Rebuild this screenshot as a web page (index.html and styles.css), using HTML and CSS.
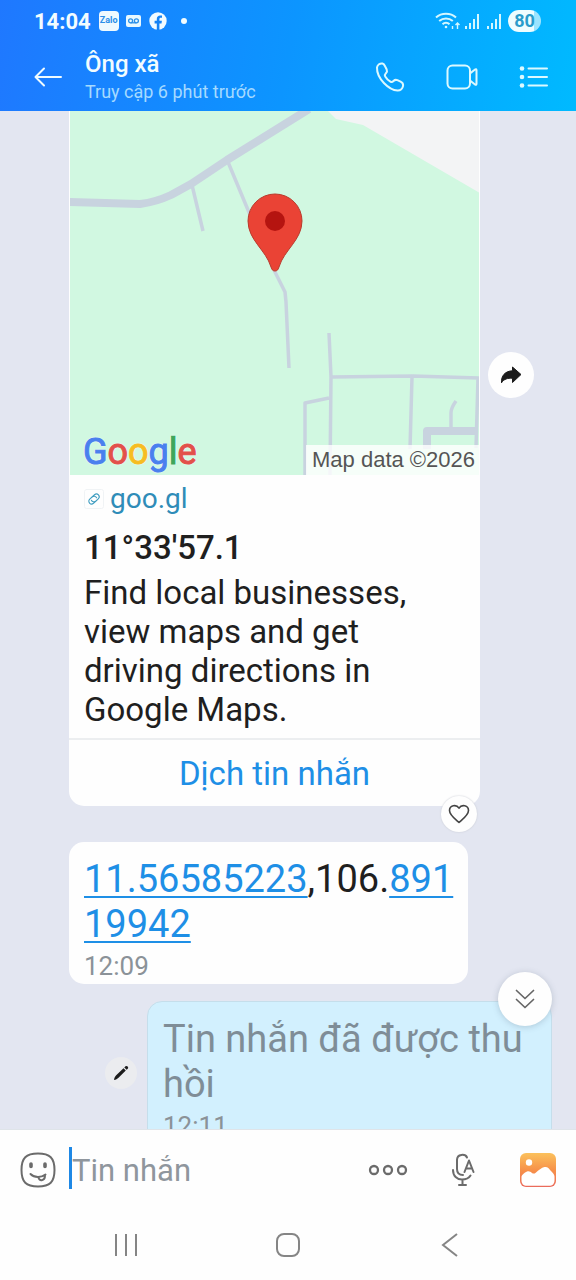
FILE: index.html
```html
<!DOCTYPE html>
<html lang="vi">

<head>
    <meta charset="utf-8">
    <meta name="viewport" content="width=device-width, initial-scale=1">
    <title>Ông xã</title>
    <link rel="stylesheet" href="styles.css">
</head>

<body>

    <header class="header">
        <div class="status">
            <span class="clock">14:04</span>
            <span class="zalo">Zalo</span>
            <svg class="voicemail" width="15" height="12" viewBox="0 0 15 12">
                <rect width="15" height="12" rx="2" fill="#e8f8ff" />
                <g fill="none" stroke="#2b8fe8" stroke-width="1.3">
                    <circle cx="4.6" cy="5.8" r="2" />
                    <circle cx="10.4" cy="5.8" r="2" />
                    <path d="M4.6 7.8h5.8" />
                </g>
            </svg>
            <svg class="facebook" width="18" height="18" viewBox="0 0 18 18">
                <circle cx="9" cy="9" r="8.7" fill="#f2fbff" />
                <path d="M7.8 18v-6.6H5.6V8.8h2.2V7c0-2.4 1.3-3.6 3.5-3.6l1.7.1v2.2h-1.1c-1.1 0-1.5.6-1.5 1.4v1.7h2.5l-.4 2.6h-2.1V18z" fill="#1583f5" />
            </svg>
            <span class="dot"></span>
            <span class="spacer"></span>
            <svg width="66" height="20" viewBox="0 0 66 20" fill="none" stroke="#d4f7ff" stroke-width="2">
                <path d="M1 6.500c5.500-5 14.500-5 20 0M4.200 10c4-3.500 9.600-3.500 13.600 0M7.500 13.200c2-1.800 5-1.800 7 0" />
                <circle cx="11" cy="16" r="1.300" fill="#d4f7ff" stroke="none" />
                <path d="M17.500 18v-3M22.500 18v-6M20.500 14l2-2 2 2" stroke-width="1.400" />
                <path d="M31 18v-3M35 18v-6M39 18v-10M43 18V3M53 18v-3M57 18v-6M61 18v-10M65 18V3" />
            </svg>
            <span class="battery">80</span>
        </div>
        <div class="titlebar">
            <button class="back" aria-label="Quay lại">
                <svg width="28" height="20" viewBox="0 0 28 20" fill="none" stroke="#effbff" stroke-width="2" stroke-linecap="round" stroke-linejoin="round">
                    <path d="M27 10H2M10 1.500L1.500 10l8.500 8.500" />
                </svg>
            </button>
            <div class="who">
                <h1>Ông xã</h1>
                <p>Truy cập 6 phút trước</p>
            </div>
            <button class="action" aria-label="Gọi thoại">
                <svg width="30" height="30" viewBox="0 0 30 30" fill="none" stroke="#dcf9ff" stroke-width="2" stroke-linejoin="round">
                    <path d="M2 5.500C2.500 2.800 5 1 7.500 1.500c1.300.3 2 1.500 2.700 3l1.500 3c.7 1.600.4 2.600-.8 3.800-1.100 1.100-1.400 1.900-.7 3.100 1.300 2.200 3 3.900 5.200 5.200 1.200.7 2 .5 3.100-.6 1.200-1.200 2.300-1.500 3.900-.8l3.200 1.500c1.800.9 2.700 2.200 2.500 3.900-.4 2.800-2.600 5-5.600 4.900C14 28 1.600 16.500 2 5.500z" />
                </svg>
            </button>
            <button class="action" aria-label="Gọi video">
                <svg width="32" height="26" viewBox="0 0 32 26" fill="none" stroke="#dcf9ff" stroke-width="2" stroke-linejoin="round">
                    <rect x="1.500" y="1.500" width="22.500" height="23" rx="5" />
                    <path d="M24 9.500l5-4c.8-.6 1.500-.3 1.500.7v13.600c0 1-.7 1.300-1.500.7l-5-4" />
                </svg>
            </button>
            <button class="action" aria-label="Tùy chọn">
                <svg width="30" height="22" viewBox="0 0 30 22" fill="#dcf9ff" stroke="#dcf9ff" stroke-width="2" stroke-linecap="round">
                    <path d="M9.500 2.500H28M9.500 11H28M9.500 19.500H28" />
                    <g stroke="none">
                        <circle cx="3" cy="2.500" r="2.300" />
                        <circle cx="3" cy="11" r="2.300" />
                        <circle cx="3" cy="19.500" r="2.300" />
                    </g>
                </svg>
            </button>
        </div>
    </header>

    <main class="chat">
        <div class="messages">

            <div class="row">
                <article class="card">
                    <div class="map">
                        <svg class="map-drawing" viewBox="0 0 411 364" preserveAspectRatio="xMidYMid slice">
                            <rect width="411" height="364" fill="#d1f8e1" />
                            <path d="M259 0l8 8 27 6L411 82V0z" fill="#f3f4f5" />
                            <g fill="none" stroke="#c8d3df" stroke-width="3.500" stroke-linejoin="round">
                                <path d="M0 91l71 2q16-2 31-9l20-11 36-24 82-51" stroke-width="8" />
                                <path d="M123 74l11 46M159 51l20 48 27 62 10 20 1 10 3 66" />
                                <path d="M260 222l2 44-1 98M262 266l82-1 67 2M343 266l-2 72M236 364v-72l24-5M409 267l-2 70" />
                                <path d="M358 338v-18h50" stroke-width="8" />
                                <path d="M382 317v-15q0-5 5-12" />
                            </g>
                            <path d="M206 160c-2 0-3-1-4-4-5-17-23-27-23-46a27 27 0 0 1 54 0c0 19-18 29-23 46-1 3-2 4-4 4z" fill="#ea4335" stroke="#b93a2c" stroke-width="1" />
                            <circle cx="206" cy="110" r="10" fill="#b51410" />
                        </svg>
                        <span class="google"><span class="blue">G</span><span class="red">o</span><span class="yellow">o</span><span class="blue">g</span><span class="green">l</span><span class="red">e</span></span>
                        <span class="credit">Map data ©2026</span>
                    </div>
                    <div class="info">
                        <a class="site" href="#">
                            <svg width="20" height="20" viewBox="0 0 20 20" fill="none" stroke="#3f9dc0" stroke-width="1.100" stroke-linecap="round">
                                <rect x=".5" y=".5" width="19" height="19" rx="2" stroke="#f0f3f5" stroke-width="1" />
                                <g transform="rotate(-42 10 10)">
                                    <path d="M9.500 12.800H6.800a2.800 2.800 0 0 1 0-5.600h3.400a2.800 2.800 0 0 1 2.600 3.600" />
                                    <path d="M10.500 7.200h2.700a2.800 2.800 0 0 1 0 5.600H9.800a2.800 2.800 0 0 1-2.600-3.600" />
                                </g>
                            </svg>
                            goo.gl
                        </a>
                        <h2>11°33'57.1</h2>
                        <p>Find local businesses, view maps and get driving directions in Google Maps.</p>
                    </div>
                    <button class="translate">Dịch tin nhắn</button>
                    <button class="heart" aria-label="Thích">
                        <svg width="22" height="20" viewBox="0 0 22 20" fill="none" stroke="#444" stroke-width="1.600" stroke-linejoin="round">
                            <path d="M11 18.500C7 15 1.500 11 1.500 6.500c0-5.200 6.800-6.700 9.500-2.300 2.700-4.400 9.500-2.900 9.500 2.300C20.500 11 15 15 11 18.500z" />
                        </svg>
                    </button>
                </article>
                <button class="share" aria-label="Chia sẻ">
                    <svg width="22" height="18" viewBox="0 0 22 18" fill="#1c1c1c" stroke="#1c1c1c" stroke-linejoin="round">
                        <path d="M12.500 1L21 8.500 12.500 16.500v-4.300C7.500 12 4 13 1.500 16.800 1 10 5 5 12.500 4.800z" />
                    </svg>
                </button>
            </div>

            <article class="bubble received">
                <p><a href="#">11.56585223</a>,106.<a href="#">89119942</a></p>
                <time>12:09</time>
            </article>

            <div class="row sent-row">
                <button class="edit" aria-label="Chỉnh sửa">
                    <svg width="16" height="16" viewBox="0 0 16 16" fill="#1c1c1c">
                        <path d="M1 15c.3-2.200 1-3.500 2.200-4.700l7.300-7.100 2.300 2.300-7.300 7.300C4.200 14 3 14.700 1 15zM11.300 2.400l1-1c1.500-1.500 3.900.8 2.400 2.300l-1 1z" />
                    </svg>
                </button>
                <article class="bubble sent">
                    <p>Tin nhắn đã được thu hồi</p>
                    <time>12:11</time>
                </article>
            </div>

        </div>
        <button class="to-bottom" aria-label="Xuống cuối">
            <svg width="20" height="20" viewBox="0 0 20 20" fill="none" stroke="#666" stroke-width="1.700" stroke-linecap="round" stroke-linejoin="round">
                <path d="M1.500 1.500L10 9.500l8.500-8M1.500 10.500l8.500 8 8.500-8" />
            </svg>
        </button>
    </main>

    <form class="composer">
        <button type="button" class="smile" aria-label="Nhãn dán">
            <svg width="36" height="36" viewBox="0 0 36 36" fill="none" stroke="#6b6b6b" stroke-width="2" stroke-linecap="round" stroke-linejoin="round">
                <path d="M18 1.500c12 0 16.500 4.500 16.500 16.500S30 34.500 18 34.500 1.500 30 1.500 18 6 1.500 18 1.500z" />
                <path d="M11 12v2.500M25 12v2.500" stroke-width="3.600" />
                <path d="M10.500 22c4 4 10.500 4 15 .5M18.500 25c0 4.500 6.500 4.500 6.500-1.800" />
            </svg>
        </button>
        <input type="text" class="message" aria-label="Tin nhắn" placeholder="Tin nhắn">
        <button type="button" class="tool" aria-label="Thêm">
            <svg width="40" height="12" viewBox="0 0 40 12" fill="none" stroke="#6b6b6b" stroke-width="2.300">
                <circle cx="6" cy="6" r="4" />
                <circle cx="20" cy="6" r="4" />
                <circle cx="34" cy="6" r="4" />
            </svg>
        </button>
        <button type="button" class="tool" aria-label="Ghi âm">
            <svg width="24" height="34" viewBox="0 0 24 34" fill="none" stroke="#6b6b6b" stroke-width="2" stroke-linecap="round" stroke-linejoin="round">
                <path d="M16 4.500C14.500.8 6 .5 6 7v9c0 3.500 2 6 6 6M2 17c0 6 4 9.500 9 9.500 4 0 7-1.500 8.500-4M11.500 27v5M8 32h7" />
                <path d="M13.500 19L18 7.500 22.500 19M15 15.500h6" />
            </svg>
        </button>
        <button type="button" class="tool" aria-label="Hình ảnh">
            <svg width="36" height="34" viewBox="0 0 36 34">
                <defs>
                    <linearGradient id="sunset" x1="0" y1="0" x2="0" y2="1">
                        <stop offset="0" stop-color="#fbc15c" />
                        <stop offset=".5" stop-color="#f7924a" />
                        <stop offset="1" stop-color="#ea6a5c" />
                    </linearGradient>
                </defs>
                <rect width="36" height="34" rx="6" fill="url(#sunset)" />
                <circle cx="9" cy="9.500" r="3.200" fill="#fff" />
                <path d="M1.500 24c0-2 3-4.500 5.500-5.500 2-.8 3.500.2 5 1.500 1.500 1 2.500.7 4-.6 2.500-2 5.500-4.900 8.500-5.400s4.500 1.500 6 3.500c2 2 4 4 4 6V27c0 4-2 5.800-5.500 5.800H7c-3.500 0-5.500-1.800-5.500-5.800z" fill="#fff" />
            </svg>
        </button>
    </form>

    <nav class="system">
        <button aria-label="Gần đây">
            <svg width="24" height="24" viewBox="0 0 24 24" stroke="#858585" stroke-width="2">
                <path d="M2 1v22M12 1v22M22 1v22" />
            </svg>
        </button>
        <button aria-label="Trang chủ">
            <svg width="26" height="26" viewBox="0 0 26 26" fill="none" stroke="#858585" stroke-width="2">
                <rect x="2" y="2" width="22" height="22" rx="7" />
            </svg>
        </button>
        <button aria-label="Trở về">
            <svg width="24" height="24" viewBox="0 0 24 24" fill="none" stroke="#858585" stroke-width="2">
                <path d="M19 1L5 12l14 11" />
            </svg>
        </button>
    </nav>

</body>

</html>
```

FILE: styles.css
```css
* {
    box-sizing: border-box;
}

body {
    margin: 0;
    height: 100vh;
    display: flex;
    flex-direction: column;
    font-family: Roboto, "Noto Sans", sans-serif;
    color: #1f1f1f;
    background: #fefefe;
}

h1,
h2,
p {
    margin: 0;
    font-weight: normal;
}

button {
    display: flex;
    align-items: center;
    justify-content: center;
    padding: 0;
    border: 0;
    background: none;
    font-family: inherit;
}

svg {
    display: block;
    flex: none;
}

/* header */

.header {
    background: linear-gradient(100deg, #1f78ff 0%, #0c95ff 50%, #00baff 100%);
    color: #f2fcff;
}

.status {
    display: flex;
    align-items: center;
    height: 42px;
    padding: 0 35px 0 34px;
}

.clock {
    font-size: 22px;
    font-weight: bold;
}

.zalo {
    margin-left: 8px;
    width: 20px;
    height: 20px;
    border-radius: 4px;
    background: #effaff;
    color: #2b8fe8;
    font-size: 9px;
    font-weight: bold;
    line-height: 19px;
    text-align: center;
}

.voicemail {
    margin-left: 7px;
}

.facebook {
    margin-left: 8px;
}

.dot {
    width: 6px;
    height: 6px;
    margin-left: 14px;
    border-radius: 50%;
    background: #f2fcff;
}

.spacer {
    flex: 1;
}

.battery {
    width: 33px;
    height: 22px;
    margin-left: 7px;
    border-radius: 11px;
    background: linear-gradient(90deg, #effdff 80%, #9ce4ff 80%);
    color: #2a9ccb;
    font-size: 18px;
    font-weight: bold;
    line-height: 22px;
    text-align: center;
}

.titlebar {
    display: flex;
    align-items: center;
    height: 69px;
    padding: 0 6px 0 34px;
}

.back {
    width: 51px;
    height: 48px;
    justify-content: flex-start;
}

.who {
    flex: 1;
}

.who h1 {
    font-size: 24px;
    font-weight: 500;
    line-height: 30px;
}

.who p {
    color: #a5daff;
    font-size: 18px;
    line-height: 26px;
}

.action {
    width: 72px;
    height: 48px;
}

/* chat */

.chat {
    position: relative;
    flex: 1;
    min-height: 0;
    background: #e3e6f1;
}

.messages {
    display: flex;
    flex-direction: column;
    height: 100%;
    padding: 0 24px 0 69px;
    overflow: hidden;
}

.row {
    display: flex;
    flex: none;
}

.card {
    position: relative;
    flex: 1;
    border-radius: 0 0 15px 15px;
    background: #fefefe;
}

.map {
    position: relative;
    height: 364px;
    padding: 0 1px;
}

.map-drawing {
    width: 100%;
    height: 100%;
}

.google {
    position: absolute;
    left: 14px;
    bottom: 2px;
    font-size: 36px;
    text-shadow: 0 0 2px #fff, 0 0 2px #fff;
    -webkit-text-stroke: 1px;
}

.blue {
    color: #4a80ee;
}

.red {
    color: #e2504a;
}

.yellow {
    color: #f6bd22;
}

.green {
    color: #3fa65a;
}

.credit {
    position: absolute;
    right: 1px;
    bottom: 0;
    padding: 0 4px 0 6px;
    background: rgba(255, 255, 255, .8);
    color: #555;
    font-family: "Liberation Sans", sans-serif;
    font-size: 22px;
    line-height: 30px;
}

.info {
    padding: 8px 15px 9px;
}

.site {
    display: flex;
    align-items: center;
    gap: 6px;
    color: #2f8cb8;
    font-size: 28px;
    line-height: 32px;
    text-decoration: none;
}

.info h2 {
    margin: 12px 0 4px;
    font-size: 33px;
    font-weight: 500;
    line-height: 42px;
}

.info p {
    max-width: 340px;
    font-size: 33px;
    line-height: 39px;
}

.translate {
    width: 100%;
    height: 68px;
    border-top: 2px solid #eceef0;
    color: #1e8fe6;
    font-size: 33px;
}

.heart {
    position: absolute;
    right: 3px;
    bottom: -26px;
    width: 36px;
    height: 36px;
    border-radius: 50%;
    background: #fefefe;
    box-shadow: 0 0 2px #c5c8d0;
}

.share {
    width: 46px;
    height: 46px;
    margin: 241px 18px 0 8px;
    border-radius: 50%;
    background: #fefefe;
}

.bubble {
    padding: 15px 12px 2px 15px;
    border-radius: 15px;
}

.bubble p {
    font-size: 38px;
    line-height: 45px;
}

.bubble a {
    color: #1e8fe6;
    text-decoration-thickness: 2px;
    text-underline-offset: 4px;
}

.bubble time {
    display: block;
    margin-top: 3px;
    color: #8b9298;
    font-size: 26px;
    line-height: 32px;
}

.received {
    margin: 36px 84px 17px 0;
    background: #fefefe;
    word-break: break-all;
}

.sent-row {
    align-items: center;
    padding-left: 36px;
}

.edit {
    width: 32px;
    height: 32px;
    margin-right: 10px;
    border-radius: 50%;
    background: #ebecef;
}

.sent {
    flex: 1;
    border: 1px solid #c5deeb;
    background: #d2f0fe;
    color: #7f8d97;
}

.to-bottom {
    position: absolute;
    right: 24px;
    bottom: 103px;
    width: 54px;
    height: 54px;
    border-radius: 50%;
    background: #fefefe;
    box-shadow: 0 1px 6px rgba(90, 110, 130, .3);
}

/* message box */

.composer {
    display: flex;
    align-items: center;
    height: 81px;
    padding: 0 1px 0 20px;
    border-top: 1px solid #dfe4e9;
}

.message {
    flex: 1;
    min-width: 0;
    height: 42px;
    margin: 0 0 4px 13px;
    padding: 4px 0 0;
    border: 0;
    border-left: 3px solid #1e88e5;
    background: none;
    font-family: inherit;
    font-size: 31px;
    outline: none;
}

.message::placeholder {
    color: #8f969d;
}

.tool {
    width: 75px;
    height: 48px;
}

/* phone navigation */

.system {
    display: grid;
    grid-template-columns: repeat(3, 1fr);
    padding: 0 45px;
}

.system button {
    height: 70px;
}
```
